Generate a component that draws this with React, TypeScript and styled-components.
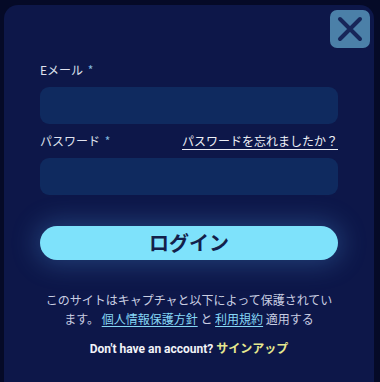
import React from 'react';
import styled, { createGlobalStyle } from 'styled-components';

const GlobalStyle = createGlobalStyle`
  html, body {
    margin: 0;
    padding: 0;
    background: #050a27;
    overflow: hidden;
  }
  * {
    box-sizing: border-box;
  }
`;

const Page = styled.div`
  width: 380px;
  height: 382px;
  padding: 5px 6px 0 4px;
  overflow: hidden;
  font-family: "Noto Sans CJK JP", "Noto Sans", sans-serif;
`;

const Modal = styled.div`
  position: relative;
  width: 370px;
  height: 377px;
  background: #0d1749;
  border-radius: 14px 14px 0 0;
  padding: 57px 36px 0 36px;
  display: flex;
  flex-direction: column;
`;

const CloseButton = styled.button`
  position: absolute;
  top: 5px;
  right: 4px;
  width: 40px;
  height: 38px;
  border: none;
  border-radius: 7px;
  background: #4b80a8;
  display: flex;
  align-items: center;
  justify-content: center;
  padding: 0;
  cursor: pointer;
`;

const LabelRow = styled.div`
  display: flex;
  justify-content: space-between;
  align-items: center;
  height: 16px;
  margin-bottom: 9px;
`;

const Label = styled.label`
  font-size: 12px;
  line-height: 16px;
  color: #dfe2ee;
`;

const Required = styled.span`
  color: #7fb6df;
  margin-left: 2px;
`;

const ForgotLink = styled.a`
  font-size: 12px;
  line-height: 16px;
  color: #eef0f6;
  text-decoration: underline;
  text-underline-offset: 3px;
  cursor: pointer;
`;

const Input = styled.input<{ $gap: number }>`
  display: block;
  width: 298px;
  height: 37px;
  border: none;
  border-radius: 9px;
  background: #0f2a5f;
  margin-bottom: ${(p) => p.$gap}px;
  outline: none;
  color: #fff;
  padding: 0 12px;
`;

const LoginButton = styled.button`
  width: 298px;
  height: 34px;
  border: none;
  border-radius: 17px;
  background: #7ee2fb;
  color: #13204a;
  font-family: "Noto Sans CJK JP", sans-serif;
  font-weight: 700;
  font-size: 20px;
  line-height: 34px;
  padding: 0;
  box-shadow: 0 0 26px 4px rgba(90, 170, 240, 0.28);
  cursor: pointer;
`;

const Notice = styled.p`
  margin: 30px 0 0 0;
  font-size: 12px;
  line-height: 19px;
  color: #c9cee2;
  text-align: center;
`;

const NoticeLink = styled.a`
  color: #86d8f6;
  text-decoration: underline;
  text-underline-offset: 2px;
  cursor: pointer;
`;

const SignupLine = styled.p`
  margin: 12px 0 0 0;
  text-align: center;
  font-family: Roboto, "Noto Sans CJK JP", sans-serif;
  font-weight: 700;
  font-size: 12px;
  line-height: 16px;
  color: #f2f3f8;
`;

const SignupLink = styled.a`
  color: #e6e88f;
  font-family: "Noto Sans CJK JP", sans-serif;
  cursor: pointer;
`;

export default function App(): React.ReactElement {
  return (
    <>
      <GlobalStyle />
      <Page>
        <Modal>
          <CloseButton aria-label="close">
            <svg width="26" height="26" viewBox="0 0 26 26">
              <path d="M3 3 L23 23 M23 3 L3 23" stroke="#172659" strokeWidth="4" strokeLinecap="round" />
            </svg>
          </CloseButton>
          <LabelRow>
            <Label>
              Eメール <Required>*</Required>
            </Label>
          </LabelRow>
          <Input type="email" $gap={9} />
          <LabelRow>
            <Label>
              パスワード <Required>*</Required>
            </Label>
            <ForgotLink>パスワードを忘れましたか？</ForgotLink>
          </LabelRow>
          <Input type="password" $gap={31} />
          <LoginButton>ログイン</LoginButton>
          <Notice>
            このサイトはキャプチャと以下によって保護されてい
            <br />
            ます。 <NoticeLink>個人情報保護方針</NoticeLink> と <NoticeLink>利用規約</NoticeLink> 適用する
          </Notice>
          <SignupLine>
            Don't have an account? <SignupLink>サインアップ</SignupLink>
          </SignupLine>
        </Modal>
      </Page>
    </>
  );
}
